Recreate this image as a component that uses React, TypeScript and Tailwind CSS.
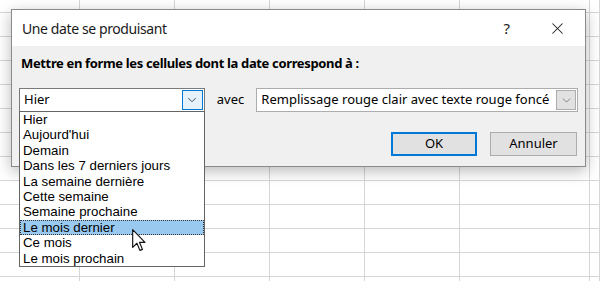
import { ChevronDown, X } from 'lucide-react';

const rows = Array.from({ length: 12 });
const cols = [80, 95, 95, 95, 95, 130, 10];

const options = [
	'Hier',
	"Aujourd'hui",
	'Demain',
	'Dans les 7 derniers jours',
	'La semaine dernière',
	'Cette semaine',
	'Semaine prochaine',
	'Le mois dernier',
	'Ce mois',
	'Le mois prochain',
];

function SheetGrid() {
	return (
		<div className="flex flex-col">
			<div className="flex h-[13px] border-b border-[#d6d6d6]">
				{cols.map((w, i) => (
					<div key={i} className="h-full shrink-0 border-r border-[#d6d6d6]" style={{ width: w }} />
				))}
			</div>
			{rows.map((_, r) => (
				<div key={r} className="flex h-[24px] border-b border-[#d6d6d6]">
					{cols.map((w, i) => (
						<div key={i} className="h-full shrink-0 border-r border-[#d6d6d6]" style={{ width: w }} />
					))}
				</div>
			))}
		</div>
	);
}

export default function App() {
	return (
		<div
			className="relative h-[281px] w-[600px] overflow-hidden bg-white text-[13px] text-black"
			style={{ fontFamily: '"Noto Sans", "Open Sans", sans-serif' }}
		>
			<SheetGrid />

			{/* dialog */}
			<div className="absolute left-[11px] top-[9px] w-[575px] border border-[#8a8a8a] bg-[#f0f0f0] shadow-[0_4px_14px_rgba(0,0,0,0.28)]">
				<div className="flex h-[36px] items-center bg-white pl-[10px] pr-[18px]">
					<span className="text-[14px] tracking-[-0.4px] text-[#1a1a1a]">Une date se produisant</span>
					<span className="ml-auto mr-[38px] text-[15px] text-[#222]">?</span>
					<X size={19} strokeWidth={1.3} className="text-[#222]" />
				</div>
				<div className="px-[7px] pb-[10px] pt-[9px]">
					<div className="ml-[2px] h-[17px] font-bold leading-[17px] tracking-[-0.35px]">
						Mettre en forme les cellules dont la date correspond à :
					</div>
					<div className="mt-[16px] flex items-center gap-[12px]">
						<div className="flex h-[24px] w-[186px] items-center border border-[#7a7a7a] bg-white pl-[4px]">
							<span>Hier</span>
							<div className="ml-auto mr-[1px] flex h-[20px] w-[21px] items-center justify-center border border-[#0078d7] bg-[#e5f1fb]">
								<ChevronDown size={14} strokeWidth={1.5} className="text-[#333]" />
							</div>
						</div>
						<span>avec</span>
						<div className="flex h-[24px] w-[322px] items-center border border-[#adadad] bg-white pl-[4px]">
							<span>Remplissage rouge clair avec texte rouge foncé</span>
							<div className="ml-auto mr-[1px] flex h-[20px] w-[20px] items-center justify-center border border-[#adadad] bg-[#e1e1e1]">
								<ChevronDown size={13} strokeWidth={1.4} className="text-[#666]" />
							</div>
						</div>
					</div>
					<div className="mt-[20px] flex justify-end gap-[13px] pr-[1px]">
						<button className="h-[24px] w-[86px] border-2 border-[#0078d7] bg-[#e1e1e1]">OK</button>
						<button className="h-[24px] w-[87px] border border-[#adadad] bg-[#e1e1e1]">Annuler</button>
					</div>
				</div>
			</div>

			{/* open dropdown list */}
			<ul
				className="absolute left-[19px] top-[111px] w-[186px] border border-[#646464] bg-white text-[13.3px]"
				style={{ fontFamily: '"Liberation Sans", Arial, sans-serif' }}
			>
				{options.map((o, i) => (
					<li
						key={o}
						className={
							i === 7
								? 'h-[15.4px] border border-dotted border-[#333] bg-[#99c9ef] pl-[2px] leading-[13.4px]'
								: 'h-[15.4px] pl-[3px] leading-[15.4px]'
						}
					>
						{o}
					</li>
				))}
			</ul>

			{/* mouse pointer */}
			<svg className="absolute left-[132px] top-[229px]" width="14" height="23" viewBox="0 0 12 20">
				<path
					d="M0.5 0.5 L0.5 16 L4.2 12.4 L6.8 18.6 L9 17.7 L6.4 11.6 L11.2 11.6 Z"
					fill="white"
					stroke="#111"
					strokeWidth="1"
					strokeLinejoin="round"
				/>
			</svg>
		</div>
	);
}
